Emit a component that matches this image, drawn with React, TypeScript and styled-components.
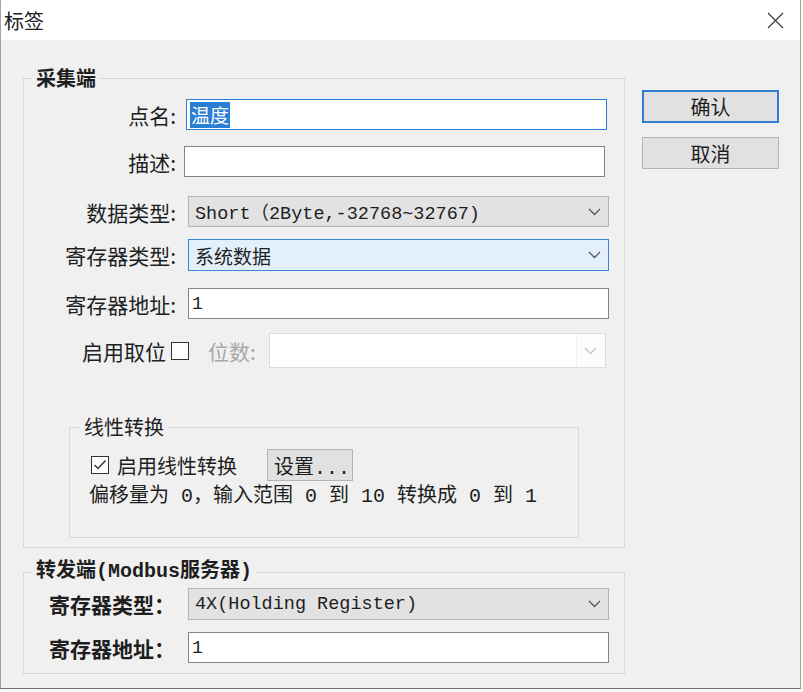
import React from 'react';
import styled, { createGlobalStyle } from 'styled-components';

const sans = `"Noto Sans CJK SC", "Liberation Sans", sans-serif`;
const mono = `"Liberation Mono", "Noto Sans CJK SC", monospace`;

const GlobalStyle = createGlobalStyle`
  html, body {
    margin: 0;
    padding: 0;
    background: #f8f8f8;
  }
  body {
    font-family: ${sans};
  }
`;

const Window = styled.div`
  width: 801px;
  height: 689px;
  box-sizing: border-box;
  border-left: 1px solid #a3a3a3;
  border-right: 1px solid #a3a3a3;
  border-bottom: 1px solid #707070;
  background: #f0f0f0;
  display: flex;
  flex-direction: column;
  overflow: hidden;
`;

const TitleBar = styled.div`
  height: 40px;
  flex-shrink: 0;
  background: #ffffff;
  display: flex;
  align-items: center;
  justify-content: space-between;
  padding-left: 3px;
`;

const Title = styled.span`
  font-size: 20px;
  color: #222;
`;

const CloseButton = styled.div`
  width: 50px;
  height: 40px;
  display: flex;
  align-items: center;
  justify-content: center;
`;

const Body = styled.div`
  flex: 1;
  display: flex;
  padding: 27px 0 0 22px;
`;

const LeftColumn = styled.div`
  width: 602px;
  display: flex;
  flex-direction: column;
`;

const RightColumn = styled.div`
  margin-left: 17px;
  padding-top: 23px;
  display: flex;
  flex-direction: column;
  gap: 14px;
`;

const GroupBox = styled.fieldset<{ $mt?: number; $ml?: number; $w?: number; $pt?: number; $pb?: number }>`
  margin: ${({ $mt }) => $mt ?? 0}px 0 0 ${({ $ml }) => $ml ?? 0}px;
  padding: ${({ $pt }) => $pt ?? 0}px 0 ${({ $pb }) => $pb ?? 0}px 0;
  width: ${({ $w }) => ($w ? `${$w}px` : 'auto')};
  box-sizing: border-box;
  border: 1px solid #d8d8d8;
  min-width: 0;
`;

const Caption = styled.legend<{ $indent: number; $bold?: boolean; $mono?: boolean }>`
  margin-left: ${({ $indent }) => $indent}px;
  padding: 0 4px;
  font-family: ${({ $mono }) => ($mono ? mono : sans)};
  font-size: 20px;
  font-weight: ${({ $bold }) => ($bold ? 700 : 400)};
  line-height: 22px;
  color: #1e1e1e;
`;

const FieldRow = styled.div<{ $mt?: number; $pl?: number }>`
  display: flex;
  align-items: center;
  margin-top: ${({ $mt }) => $mt ?? 0}px;
  padding-left: ${({ $pl }) => $pl ?? 0}px;
`;

const Label = styled.span<{ $w: number; $right?: boolean; $bold?: boolean; $disabled?: boolean }>`
  width: ${({ $w }) => $w}px;
  flex-shrink: 0;
  text-align: ${({ $right }) => ($right ? 'right' : 'left')};
  font-family: ${sans};
  font-size: 21px;
  font-weight: ${({ $bold }) => ($bold ? 700 : 400)};
  color: ${({ $disabled }) => ($disabled ? '#a8a8a8' : '#1e1e1e')};
  white-space: nowrap;
`;

const TextBox = styled.div<{ $h: number; $focused?: boolean; $ml?: number }>`
  width: 421px;
  height: ${({ $h }) => $h}px;
  margin-left: ${({ $ml }) => $ml ?? 11}px;
  box-sizing: border-box;
  border: 1px solid ${({ $focused }) => ($focused ? '#2a7fd4' : '#858585')};
  background: #ffffff;
  display: flex;
  align-items: center;
  padding-left: 3px;
  font-family: ${mono};
  font-size: 18px;
  color: #1e1e1e;
`;

const Selected = styled.span`
  background: #2a7fd4;
  color: #ffffff;
  padding: 1px 1px;
  font-family: ${sans};
  font-size: 19px;
  line-height: 24px;
`;

type ComboVariant = 'normal' | 'hot' | 'disabled';

const comboBorder: Record<ComboVariant, string> = {
  normal: '#b4b4b4',
  hot: '#3a86d6',
  disabled: '#dcdcdc',
};

const comboBackground: Record<ComboVariant, string> = {
  normal: '#e2e2e2',
  hot: '#e3f0fb',
  disabled: '#ffffff',
};

const ComboBox = styled.div<{ $variant: ComboVariant; $h: number; $w?: number; $ml?: number }>`
  width: ${({ $w }) => $w ?? 421}px;
  height: ${({ $h }) => $h}px;
  margin-left: ${({ $ml }) => ($ml === undefined ? '11px' : `${$ml}px`)};
  box-sizing: border-box;
  border: 1px solid ${({ $variant }) => comboBorder[$variant]};
  background: ${({ $variant }) => comboBackground[$variant]};
  display: flex;
  align-items: center;
  justify-content: space-between;
  padding: 0 6px 0 6px;
  color: #1e1e1e;
`;

const ComboText = styled.span<{ $cjk?: boolean }>`
  font-family: ${({ $cjk }) => ($cjk ? sans : mono)};
  font-size: ${({ $cjk }) => ($cjk ? 19 : 18.5)}px;
  white-space: nowrap;
`;

const ArrowCell = styled.div<{ $split?: boolean }>`
  height: 100%;
  width: 28px;
  margin-right: -6px;
  display: flex;
  align-items: center;
  justify-content: center;
  border-left: ${({ $split }) => ($split ? '1px solid #f0f0f0' : 'none')};
  background: ${({ $split }) => ($split ? '#fcfcfc' : 'transparent')};
`;

const CheckBox = styled.div<{ $ml?: number }>`
  width: 18px;
  height: 18px;
  margin-left: ${({ $ml }) => $ml ?? 0}px;
  flex-shrink: 0;
  box-sizing: border-box;
  border: 1px solid #333333;
  background: #ffffff;
  display: flex;
  align-items: center;
  justify-content: center;
`;

const InlineText = styled.span<{ $ml?: number }>`
  margin-left: ${({ $ml }) => $ml ?? 0}px;
  font-size: 20px;
  color: #1e1e1e;
  white-space: nowrap;
`;

const PushButton = styled.div<{ $default?: boolean; $w: number; $h: number; $ml?: number }>`
  width: ${({ $w }) => $w}px;
  height: ${({ $h }) => $h}px;
  margin-left: ${({ $ml }) => $ml ?? 0}px;
  box-sizing: border-box;
  border: ${({ $default }) => ($default ? '2px solid #2f7fd0' : '1px solid #b4b4b4')};
  background: #e1e1e1;
  display: flex;
  align-items: center;
  justify-content: center;
  font-size: 20px;
  color: #1e1e1e;
`;

const SetupButton = styled(PushButton)`
  justify-content: flex-start;
  padding-left: 6px;
  font-family: ${mono};
`;

const InfoLine = styled.div`
  margin-top: 5px;
  padding-left: 19px;
  font-family: ${mono};
  font-size: 20px;
  line-height: 22px;
  color: #1e1e1e;
  white-space: pre;
`;

const Chevron = ({ color = '#5a5a5a' }: { color?: string }) => (
  <svg width="13" height="8" viewBox="0 0 13 8">
    <path d="M1 1 L6.5 6.5 L12 1" fill="none" stroke={color} strokeWidth="1.4" />
  </svg>
);

const CloseIcon = () => (
  <svg width="17" height="17" viewBox="0 0 17 17">
    <path d="M1 1 L16 16 M16 1 L1 16" stroke="#3a3a3a" strokeWidth="1.2" />
  </svg>
);

const CheckMark = () => (
  <svg width="14" height="12" viewBox="0 0 14 12">
    <path d="M1.5 6 L5 9.5 L12.5 1.5" fill="none" stroke="#333" strokeWidth="1.4" />
  </svg>
);

export default function App() {
  return (
    <>
      <GlobalStyle />
      <Window>
        <TitleBar>
          <Title>标签</Title>
          <CloseButton>
            <CloseIcon />
          </CloseButton>
        </TitleBar>
        <Body>
          <LeftColumn>
            <GroupBox $pt={10} $pb={9}>
              <Caption $indent={8} $bold>采集端</Caption>

              <FieldRow>
                <Label $w={152} $right>点名:</Label>
                <TextBox $h={31} $focused $ml={10}>
                  <Selected>温度</Selected>
                </TextBox>
              </FieldRow>

              <FieldRow $mt={16}>
                <Label $w={152} $right>描述:</Label>
                <TextBox $h={31} $ml={8} />
              </FieldRow>

              <FieldRow $mt={19}>
                <Label $w={152} $right>数据类型:</Label>
                <ComboBox $variant="normal" $h={31} $ml={12}>
                  <ComboText>Short（2Byte,-32768~32767)</ComboText>
                  <ArrowCell>
                    <Chevron />
                  </ArrowCell>
                </ComboBox>
              </FieldRow>

              <FieldRow $mt={12}>
                <Label $w={152} $right>寄存器类型:</Label>
                <ComboBox $variant="hot" $h={32} $ml={12}>
                  <ComboText $cjk>系统数据</ComboText>
                  <ArrowCell>
                    <Chevron />
                  </ArrowCell>
                </ComboBox>
              </FieldRow>

              <FieldRow $mt={17}>
                <Label $w={152} $right>寄存器地址:</Label>
                <TextBox $h={31} $ml={12}>1</TextBox>
              </FieldRow>

              <FieldRow $mt={14}>
                <Label $w={142} $right>启用取位</Label>
                <CheckBox $ml={5} />
                <InlineText $ml={19}>
                  <Label $w={50} $disabled>位数:</Label>
                </InlineText>
                <ComboBox $variant="disabled" $h={35} $w={337} $ml={13}>
                  <span />
                  <ArrowCell $split>
                    <Chevron color="#c4c4c4" />
                  </ArrowCell>
                </ComboBox>
              </FieldRow>

              <GroupBox $mt={48} $ml={45} $w={510} $pt={11} $pb={29}>
                <Caption $indent={10}>线性转换</Caption>
                <FieldRow>
                  <CheckBox $ml={21}>
                    <CheckMark />
                  </CheckBox>
                  <InlineText $ml={8}>启用线性转换</InlineText>
                  <SetupButton $w={86} $h={32} $ml={30}>设置...</SetupButton>
                </FieldRow>
                <InfoLine>偏移量为 0，输入范围 0 到 10 转换成 0 到 1</InfoLine>
              </GroupBox>
            </GroupBox>

            <GroupBox $mt={13} $pt={5} $pb={10}>
              <Caption $indent={8} $mono $bold>转发端(Modbus服务器)</Caption>
              <FieldRow $pl={25}>
                <Label $w={139} $bold>寄存器类型：</Label>
                <ComboBox $variant="normal" $h={32} $ml={0}>
                  <ComboText>4X(Holding Register)</ComboText>
                  <ArrowCell>
                    <Chevron />
                  </ArrowCell>
                </ComboBox>
              </FieldRow>
              <FieldRow $mt={12} $pl={25}>
                <Label $w={139} $bold>寄存器地址：</Label>
                <TextBox $h={31} $ml={0}>1</TextBox>
              </FieldRow>
            </GroupBox>
          </LeftColumn>

          <RightColumn>
            <PushButton $default $w={137} $h={33}>确认</PushButton>
            <PushButton $w={137} $h={32}>取消</PushButton>
          </RightColumn>
        </Body>
      </Window>
    </>
  );
}
